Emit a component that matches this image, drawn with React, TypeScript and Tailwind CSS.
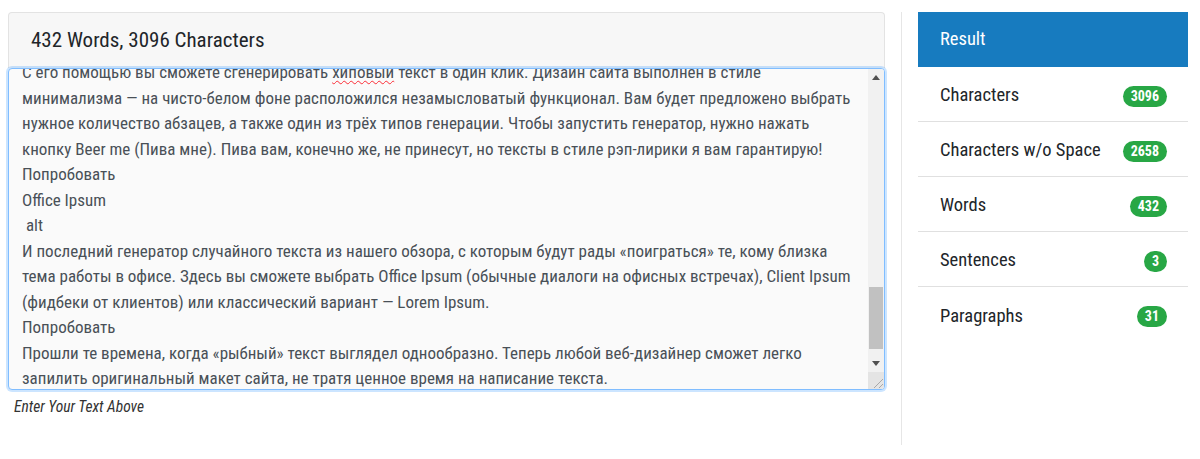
import { useEffect, useRef } from "react";

// text that sits above the visible part of the editor
const before = [
  "Генераторы «рыбного» текста давно стали привычным инструментом для дизайнеров, верстальщиков и разработчиков.",
  "С их помощью можно быстро заполнить макет и посмотреть, как страница будет выглядеть с настоящим контентом.",
  "Ниже собраны самые популярные сервисы, которые помогут сгенерировать текст на русском и английском языках.",
  "Lorem Ipsum",
  " alt",
  "Классический генератор, который знает каждый веб-дизайнер. Можно выбрать количество абзацев, слов или байтов,",
  "а также указать, должен ли текст начинаться со слов «Lorem ipsum dolor sit amet».",
  "Попробовать",
  "Рыбатекст",
  " alt",
  "Русскоязычный генератор, который создаёт осмысленные предложения вместо набора латинских слов. Подходит для",
  "макетов, где важно показать заказчику, как будет читаться текст на готовом сайте.",
  "Попробовать",
  "Fish Text",
  " alt",
  "Ещё один сервис на русском языке. Позволяет сгенерировать заголовки, предложения и абзацы, а также скопировать",
  "результат в один клик. Есть API для разработчиков и удобный виджет.",
  "Попробовать",
  "Hipster Ipsum",
  " alt",
  "Генератор текста для тех, кто устал от скучной латыни. Выберите количество абзацев и степень «хипстерности» —",
  "и получите текст про крафтовое пиво, бороды, винил и фиксированные велосипеды.",
  "Попробовать",
  "Bacon Ipsum",
  " alt",
  "Мясной генератор для любителей бекона. Можно выбрать вариант только с мясом или смешать его с обычным",
  "латинским текстом, указать количество абзацев и начать текст со слов «Bacon ipsum dolor amet».",
  "Попробовать",
  "Cupcake Ipsum",
  " alt",
  "Сладкий генератор, который наполнит ваш макет кексами, тортами и мармеладом. Текст получается забавным и",
  "отлично подходит для сайтов кондитерских, кафе и детских проектов.",
  "Попробовать",
  "Space Ipsum",
  " alt",
  "Генератор цитат известных астронавтов и учёных. Отличный вариант для проектов, связанных с наукой,",
  "технологиями и исследованием космоса.",
  "Попробовать",
  "Rap Ipsum",
  " alt",
];

const after = [
  "Здесь можно сгенерировать фразы, которые будут выглядеть как настоящий текст.",
  "Попробовать",
];

const stats = [
  { label: "Characters", value: "3096" },
  { label: "Characters w/o Space", value: "2658" },
  { label: "Words", value: "432" },
  { label: "Sentences", value: "3" },
  { label: "Paragraphs", value: "31" },
];

function Scrollbar() {
  return (
    <div className="absolute right-0 top-0 bottom-0 w-[16px] flex flex-col bg-[#f1f1f1]">
      <div className="h-[17px] flex items-center justify-center">
        <svg width="8" height="5" viewBox="0 0 8 5">
          <path d="M0 5 L4 0 L8 5 Z" fill="#505050" />
        </svg>
      </div>
      <div className="flex-1 flex flex-col px-[1px]">
        <div className="h-[201px]" />
        <div className="h-[62px] bg-[#c1c1c1]" />
      </div>
      <div className="h-[17px] flex items-center justify-center">
        <svg width="8" height="5" viewBox="0 0 8 5">
          <path d="M0 0 L8 0 L4 5 Z" fill="#505050" />
        </svg>
      </div>
      <div className="h-[17px] bg-[#e4e4e4] flex items-end justify-end">
        <svg width="14" height="14" viewBox="0 0 14 14">
          <path d="M13 4 L4 13 M13 9 L9 13" stroke="#a8a8a8" strokeWidth="1" />
        </svg>
      </div>
    </div>
  );
}

export default function App() {
  const boxRef = useRef<HTMLDivElement>(null);
  const markRef = useRef<HTMLDivElement>(null);

  useEffect(() => {
    if (boxRef.current && markRef.current) {
      boxRef.current.scrollTop = markRef.current.offsetTop + 9;
    }
  }, []);

  return (
    <div className="flex w-[1200px] h-[459px] bg-white pl-[8px] pr-[12px] pt-[12px] font-['Roboto',sans-serif] font-stretch-[87%] text-[#212529]">
      <div className="w-[877px] flex flex-col">
        <div className="h-[56px] flex items-center px-[22px] bg-[#f7f7f7] border border-b-0 border-[#e3e3e3] rounded-t-[4px] text-[21px]">
          432 Words, 3096 Characters
        </div>
        <div className="relative h-[322px] bg-[#fafafa] border border-[#80bdff] rounded-[4px] shadow-[0_0_0_2px_rgba(0,123,255,0.2)] overflow-hidden">
          <div
            ref={boxRef}
            className="relative h-full overflow-hidden px-[13px] py-[6px] text-[17px] leading-[25.5px] text-[#495057]"
          >
            {before.map((line, i) => (
              <div key={i} className="whitespace-pre-wrap">
                {line}
              </div>
            ))}
            <div ref={markRef} className="whitespace-pre">
              С его помощью вы сможете сгенерировать{" "}
              <span className="underline decoration-wavy decoration-red-500 decoration-1 underline-offset-2">хиповый</span>{" "}
              текст в один клик. Дизайн сайта выполнен в стиле
            </div>
            <div className="whitespace-pre">минимализма — на чисто-белом фоне расположился незамысловатый функционал. Вам будет предложено выбрать</div>
            <div className="whitespace-pre">нужное количество абзацев, а также один из трёх типов генерации. Чтобы запустить генератор, нужно нажать</div>
            <div className="whitespace-pre">кнопку Beer me (Пива мне). Пива вам, конечно же, не принесут, но тексты в стиле рэп-лирики я вам гарантирую!</div>
            <div className="whitespace-pre">Попробовать</div>
            <div className="whitespace-pre">Office Ipsum</div>
            <div className="whitespace-pre"> alt</div>
            <div className="whitespace-pre">И последний генератор случайного текста из нашего обзора, с которым будут рады «поиграться» те, кому близка</div>
            <div className="whitespace-pre">тема работы в офисе. Здесь вы сможете выбрать Office Ipsum (обычные диалоги на офисных встречах), Client Ipsum</div>
            <div className="whitespace-pre">(фидбеки от клиентов) или классический вариант — Lorem Ipsum.</div>
            <div className="whitespace-pre">Попробовать</div>
            <div className="whitespace-pre">Прошли те времена, когда «рыбный» текст выглядел однообразно. Теперь любой веб-дизайнер сможет легко</div>
            <div className="whitespace-pre">запилить оригинальный макет сайта, не тратя ценное время на написание текста.</div>
            {after.map((line, i) => (
              <div key={i} className="whitespace-pre-wrap">
                {line}
              </div>
            ))}
          </div>
          <Scrollbar />
        </div>
        <div className="pl-[6px] pt-[6px] text-[15.5px] italic text-[#333]">Enter Your Text Above</div>
      </div>

      <div className="ml-[16px] h-[433px] border-l border-[#e6e6e6] pl-[16px] flex-1">
        <div className="h-[55px] flex items-center px-[22px] bg-[#177bbf] text-white text-[18.5px]">Result</div>
        {stats.map((s, i) => (
          <div
            key={s.label}
            className={
              i < stats.length - 1
                ? "h-[55px] flex items-center justify-between pl-[22px] pr-[21px] pt-[4px] text-[18.5px] border-b border-[#e0e0e0]"
                : "h-[55px] flex items-center justify-between pl-[22px] pr-[21px] pt-[4px] text-[18.5px]"
            }
          >
            <span>{s.label}</span>
            <span className="h-[21px] flex items-center rounded-full bg-[#28a745] px-[8px] text-[14px] font-bold text-white">
              {s.value}
            </span>
          </div>
        ))}
      </div>
    </div>
  );
}
